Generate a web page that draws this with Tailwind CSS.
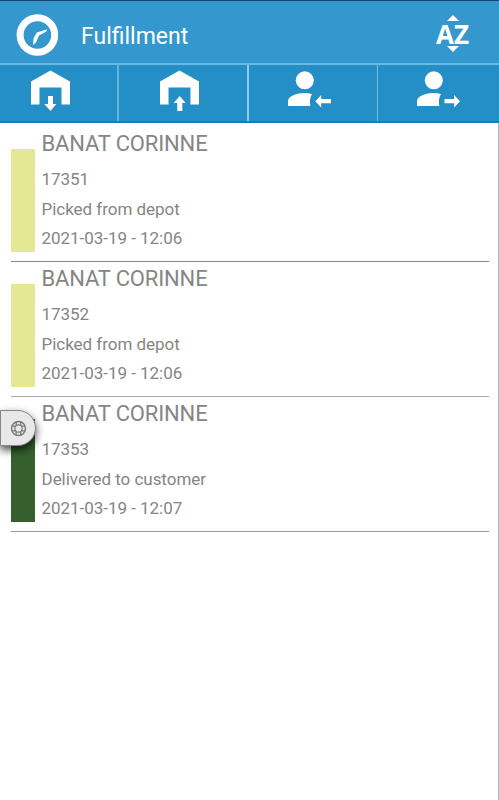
<!DOCTYPE html>
<html lang="en">

<head>
    <meta charset="UTF-8">
    <meta name="viewport" content="width=device-width, initial-scale=1.0">
    <script src="https://cdn.jsdelivr.net/npm/@tailwindcss/browser@4"></script>
    <title>Fulfillment</title>
</head>

<body class="bg-white font-['Roboto',sans-serif] text-[#858585]">
    <div class="relative h-[800px] w-full overflow-hidden">
        <header class="flex h-[63px] items-center border-t border-[#16486e] bg-[#3498ce] pr-[30px] pl-[16px] pt-[6px] text-white">
            <svg class="size-[42px]" viewBox="0 0 42 42" fill="none">
                <circle cx="21.4" cy="21" r="17.3" stroke="white" stroke-width="7" />
                <path d="M31.3 15.3L20.8 18.6L17.6 24L17 31L20 28.6L23 21.4L30 17.8Z" fill="white" />
            </svg>
            <h1 class="mt-[4px] ml-[23px] text-[23px] leading-7 whitespace-nowrap">Fulfillment</h1>
            <button class="-mt-[3px] ml-auto flex flex-col items-center" aria-label="Sort">
                <svg class="h-[6px] w-[12px]" viewBox="0 0 12 6"><path d="M0 6L6 0L12 6Z" fill="white" /></svg>
                <span class="mt-[2px] mb-[1px] flex h-[22px] items-center font-['Open_Sans',sans-serif] text-[26px] leading-[22px] font-bold">AZ</span>
                <svg class="h-[6px] w-[12px]" viewBox="0 0 12 6"><path d="M0 0L6 6L12 0Z" fill="white" /></svg>
            </button>
        </header>

        <nav class="grid h-[60px] grid-cols-[119px_130px_129px_1fr] border-t-2 border-b-2 border-t-[#6ab9e0] border-b-[#1b7eb3] bg-[#248ec6]">
            <button class="border-r-2 border-[#65b3dd] pl-[31px]" aria-label="Into depot">
                <svg class="h-[56px] w-[40px]" viewBox="0 0 40 56" fill="white">
                    <path d="M0 16.5L19.5 5.5L39 16.5V39.5H30.5V22.5H8.5V39.5H0Z" />
                    <path d="M17 31H22V39H25.3L19.5 46L13.3 39H17Z" />
                </svg>
            </button>
            <button class="border-r-2 border-[#8dcceb] pl-[41px]" aria-label="Out of depot">
                <svg class="h-[56px] w-[40px]" viewBox="0 0 40 56" fill="white">
                    <path d="M0 16.5L19.5 5.5L39 16.5V39.5H30.5V22.5H8.5V39.5H0Z" />
                    <path d="M17.3 46H22.3V38H25.6L19.8 31L13.6 38H17.3Z" />
                </svg>
            </button>
            <button class="border-r border-[#75bde2] pl-[39px]" aria-label="From customer">
                <svg class="h-[56px] w-[44px]" viewBox="0 0 44 56" fill="white">
                    <circle cx="16.8" cy="15.3" r="9" />
                    <path d="M0 41V36C0 31 9 28 16.5 28C19 28 21.5 28.3 24 28.9C21.8 32.2 21.5 37 22.4 41Z" />
                    <path d="M27.3 36.2L33.2 30V34H43V38.2H33.2V42.5Z" />
                </svg>
            </button>
            <button class="pl-[39px]" aria-label="To customer">
                <svg class="h-[56px] w-[44px]" viewBox="0 0 44 56" fill="white">
                    <circle cx="16.8" cy="15.3" r="9" />
                    <path d="M0 41V36C0 31 9 28 16.5 28C19 28 21.5 28.3 24 28.9C21.8 32.2 21.5 37 22.4 41Z" />
                    <path d="M43 36.2L37.1 30V34H27.5V38.2H37.1V42.5Z" />
                </svg>
            </button>
        </nav>

        <main class="h-[677px] border-r border-[#b5b5b5] pt-[4px] pr-[9px] pl-[11px]">
            <article class="flex h-[135px] border-b border-[#85858a]">
                <div class="mt-[22px] h-[103px] w-[24px] bg-[#e4e794]"></div>
                <div class="ml-[6.5px] tracking-[-0.03px] whitespace-nowrap">
                    <h2 class="mt-[2px] h-[36px] text-[22px] leading-[30px] tracking-[-0.15px]">BANAT CORINNE</h2>
                    <p class="text-[17px] leading-[29.5px]">17351</p>
                    <p class="text-[17px] leading-[29.5px]">Picked from depot</p>
                    <p class="text-[17px] leading-[29.5px]">2021-03-19 - 12:06</p>
                </div>
            </article>
            <article class="flex h-[135px] border-b border-[#ababab]">
                <div class="mt-[22px] h-[103px] w-[24px] bg-[#e4e794]"></div>
                <div class="ml-[6.5px] tracking-[-0.03px] whitespace-nowrap">
                    <h2 class="mt-[2px] h-[36px] text-[22px] leading-[30px] tracking-[-0.15px]">BANAT CORINNE</h2>
                    <p class="text-[17px] leading-[29.5px]">17352</p>
                    <p class="text-[17px] leading-[29.5px]">Picked from depot</p>
                    <p class="text-[17px] leading-[29.5px]">2021-03-19 - 12:06</p>
                </div>
            </article>
            <article class="flex h-[135px] border-b border-[#9b9b9b]">
                <div class="mt-[22px] h-[103px] w-[24px] bg-[#35602d]"></div>
                <div class="ml-[6.5px] tracking-[-0.03px] whitespace-nowrap">
                    <h2 class="mt-[2px] h-[36px] text-[22px] leading-[30px] tracking-[-0.15px]">BANAT CORINNE</h2>
                    <p class="text-[17px] leading-[29.5px]">17353</p>
                    <p class="text-[17px] leading-[29.5px]">Delivered to customer</p>
                    <p class="text-[17px] leading-[29.5px]">2021-03-19 - 12:07</p>
                </div>
            </article>
        </main>

        <!-- floating help tab on the left edge -->
        <button class="absolute top-[410px] left-0 flex h-[36px] w-[36px] items-center rounded-r-full border border-[#858585] bg-[#e8e8e8] pl-[9px] shadow-[0_4px_8px_rgba(0,0,0,0.7)]" aria-label="Help">
            <svg class="size-[17px]" viewBox="0 0 17 17" fill="none" stroke="#777">
                <circle cx="8.5" cy="8.5" r="7" stroke-width="1.4" />
                <circle cx="8.5" cy="8.5" r="3.7" stroke-width="1.2" />
                <path d="M6.2 1.8V5.6M10.8 1.8V5.6M6.2 11.4V15.2M10.8 11.4V15.2M1.8 6.2H5.6M1.8 10.8H5.6M11.4 6.2H15.2M11.4 10.8H15.2" stroke-width="1.3" />
            </svg>
        </button>
    </div>
</body>

</html>
